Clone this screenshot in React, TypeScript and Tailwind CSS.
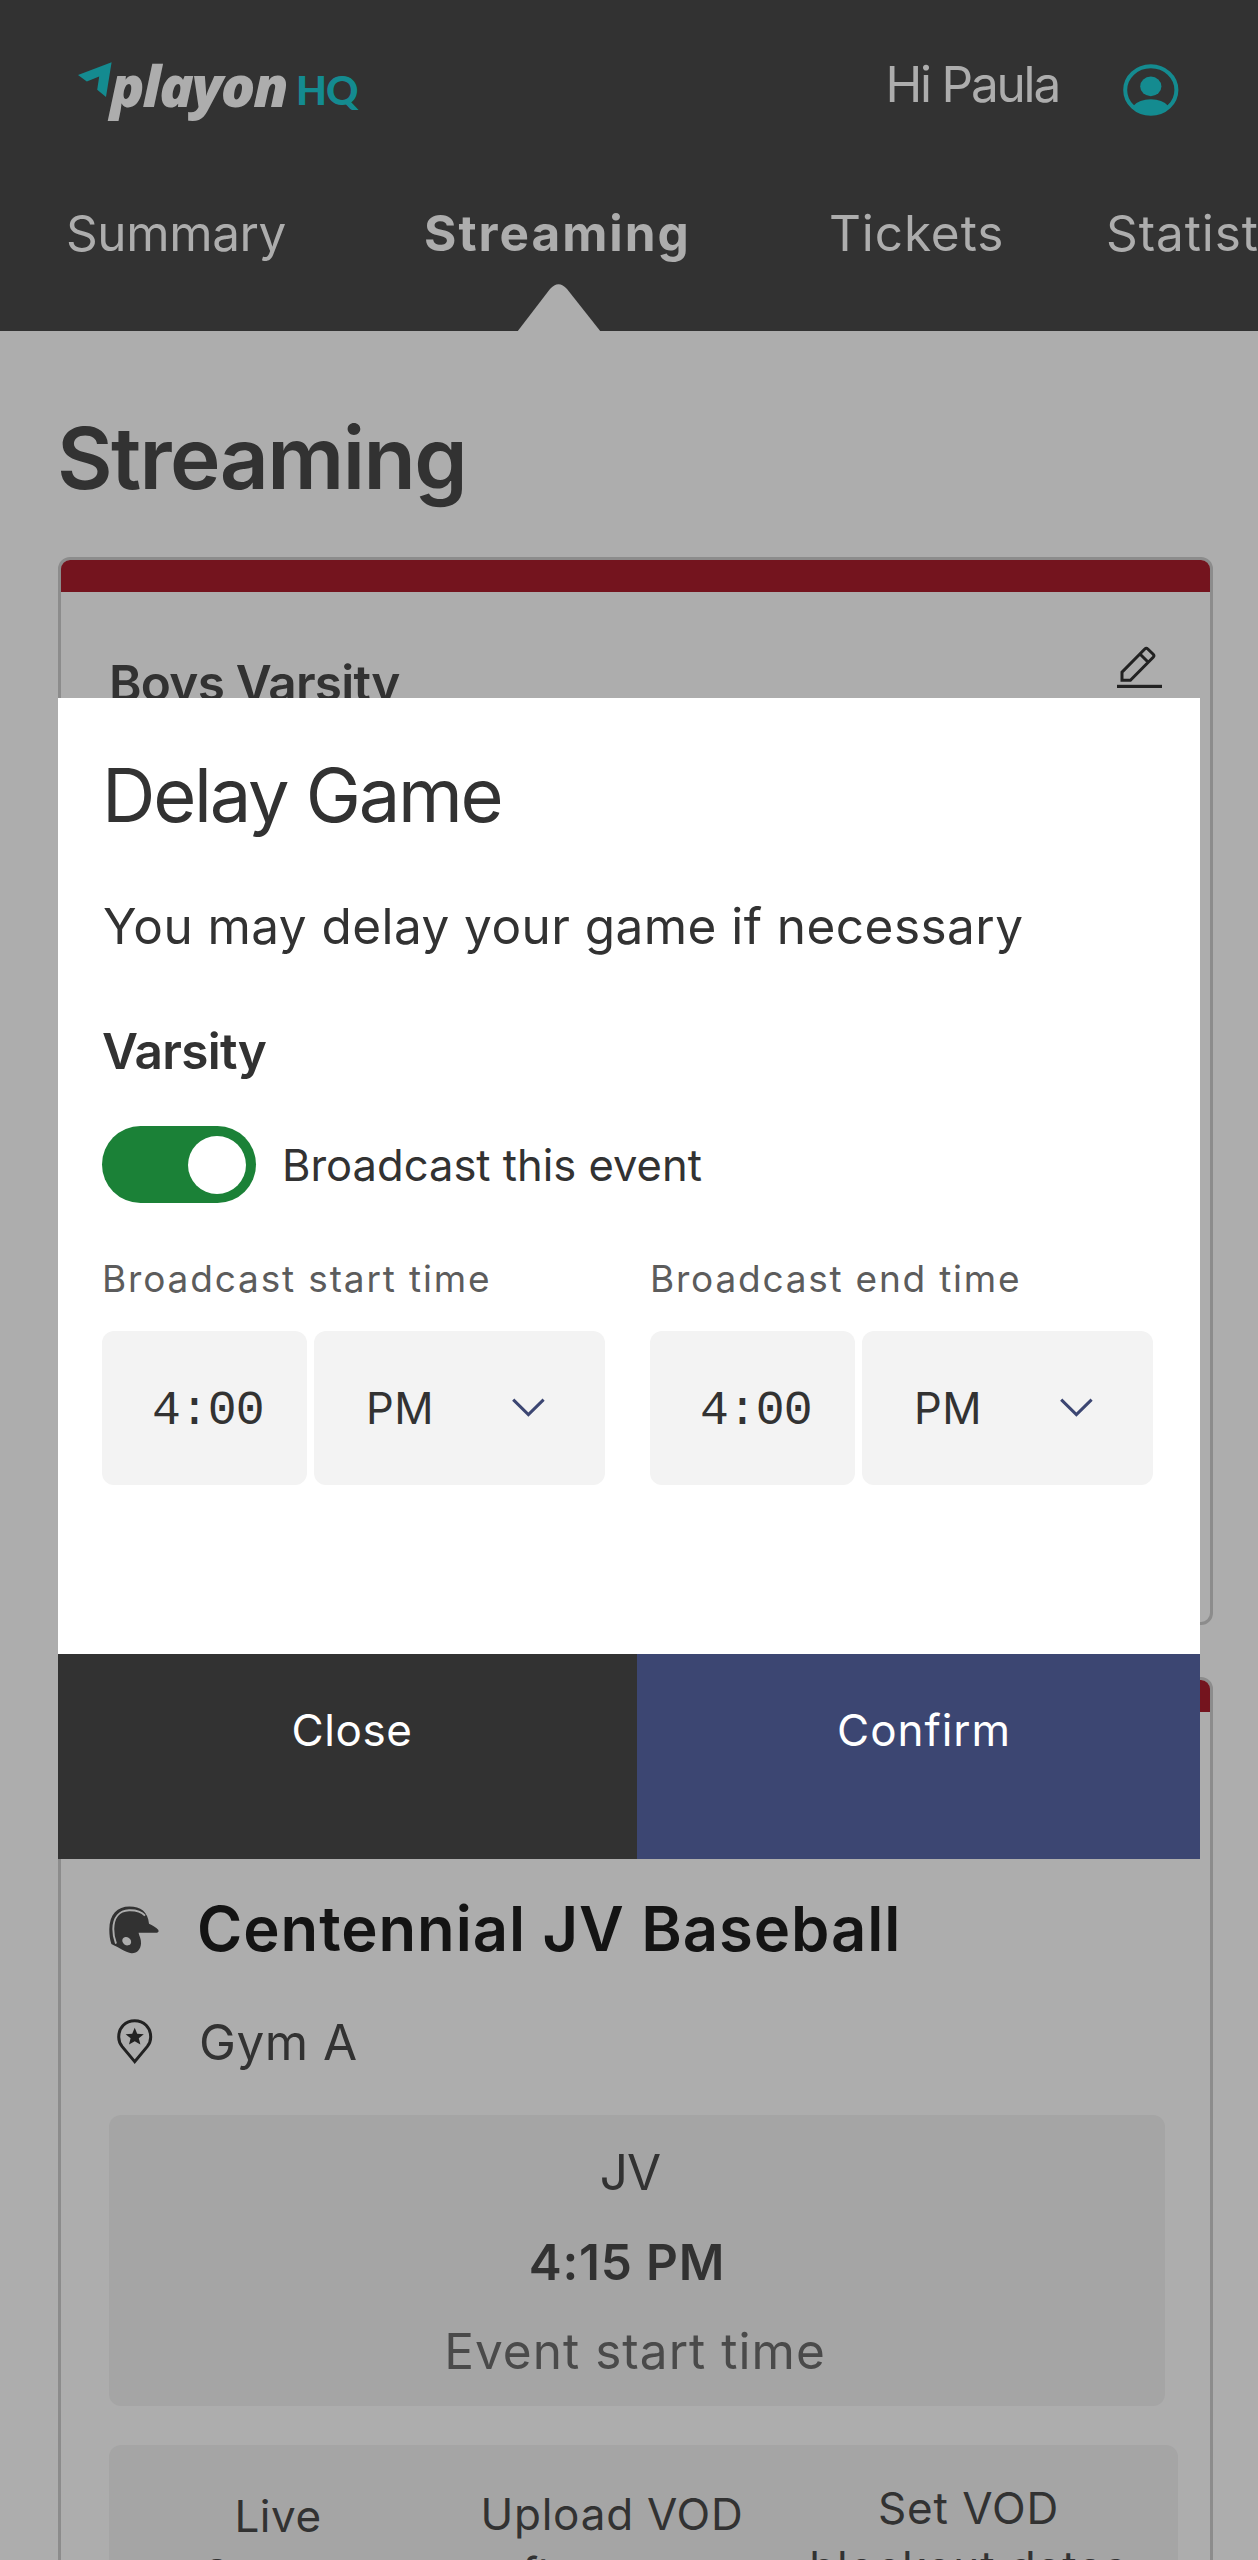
function ArrowMark() {
  return (
    <svg width="34" height="36" viewBox="0 0 34 36" className="shrink-0" aria-hidden="true">
      <path d="M0 13 L33.6 0.3 L28 35 L19.2 27.7 L21.2 14.6 L8.8 19.4 Z" fill="#148b90" />
    </svg>
  );
}

function Avatar() {
  return (
    <svg width="56" height="52" viewBox="0 0 56 52" className="shrink-0" aria-label="Account">
      <ellipse cx="27.8" cy="26" rx="25.6" ry="23.8" fill="none" stroke="#148b90" strokeWidth="4" />
      <ellipse cx="27.8" cy="22.4" rx="10.6" ry="9.8" fill="#148b90" />
      <path d="M10.5 41.8 Q16 35.2 27.8 35.2 Q39.5 35.2 45 41.8 Q38.5 50.5 27.8 50.5 Q17 50.5 10.5 41.8 Z" fill="#148b90" />
    </svg>
  );
}

function Pencil() {
  return (
    <svg width="45" height="43" viewBox="0 0 45 43" aria-label="Edit">
      <path
        d="M5 34.3 V26.2 L27.8 3 Q29.3 1.5 30.8 3 L36.2 8.3 Q37.6 9.8 36.2 11.3 L13.4 34.3 Z M23.2 8.2 L31 16"
        fill="none"
        stroke="#222"
        strokeWidth="3"
      />
      <rect x="0" y="38.8" width="45" height="3.2" fill="#222" />
    </svg>
  );
}

function Helmet() {
  return (
    <svg width="50" height="48" viewBox="0 0 50 48" className="shrink-0" aria-hidden="true">
      <path
        d="M2.4 38 C0.8 33.5 0.3 28.5 0.3 23.5 C0.3 8 8.5 0.4 20.5 0.4 C31.5 0.4 39 5.5 40 17.8 C43.5 19.2 47 21.5 49.2 23.8 C49.9 25 49.6 26.6 48 26.8 H29.6 C30.2 30.5 32.2 32.2 32 37.5 C31.7 43.5 28 47.5 22.5 47.2 C17 46.6 10 41.5 2.4 38 Z"
        fill="#323232"
      />
      <path
        d="M7 37.6 C5.2 33 4.2 28 4.3 23 C4.5 11 10.5 4.6 20 4.2 C26.5 4 32 5.2 36 9.6"
        fill="none"
        stroke="#adadad"
        strokeWidth="1.9"
      />
      <ellipse cx="17.7" cy="35.2" rx="4.7" ry="3.9" transform="rotate(35 17.7 35.2)" fill="#adadad" />
    </svg>
  );
}

function VenuePin() {
  return (
    <svg width="36" height="46" viewBox="0 0 36 46" className="shrink-0" aria-hidden="true">
      <path
        d="M17.7 42.6 L5.2 27.6 C2.8 24.5 1.7 21.4 1.7 17.9 C1.7 8.6 8.6 1.7 17.7 1.7 C26.8 1.7 33.7 8.6 33.7 17.9 C33.7 21.4 32.6 24.5 30.2 27.6 Z"
        fill="none"
        stroke="#222"
        strokeWidth="3"
      />
      <path
        d="M17.7 8.8 L20.2 14.8 L26.8 15.2 L21.8 19.2 L23.4 25.6 L17.7 22.2 L12 25.6 L13.6 19.2 L8.6 15.2 L15.2 14.8 Z"
        fill="#222"
      />
    </svg>
  );
}

function Chevron() {
  return (
    <svg width="33" height="20" viewBox="0 0 33 20" aria-hidden="true">
      <path d="M1.2 1.6 L16.4 16.6 L31.6 1.6" fill="none" stroke="#3c4672" strokeWidth="3" />
    </svg>
  );
}

function TimeField({ label, tracking }: { label: string; tracking: string }) {
  return (
    <div className="w-[503px]">
      <div className={`text-[37px] leading-[48px] text-[#5c5c5c] ${tracking}`}>{label}</div>
      <div className="mt-7 flex h-[154px] gap-[7px]">
        <div className="flex w-[205px] items-center rounded-xl bg-[#f3f3f3] pt-[5px] pl-[50px] font-['Liberation_Mono',monospace] text-[48px] leading-[60px] tracking-[-0.9px]">
          4:00
        </div>
        <div className="flex flex-1 items-center justify-between rounded-xl bg-[#f3f3f3] pr-[60px] pl-[52px] text-[43.5px] leading-[60px] tracking-[0.4px]">
          PM
          <Chevron />
        </div>
      </div>
    </div>
  );
}

function Header() {
  return (
    <header className="relative h-[331px] bg-[#323232] text-[#adadad]">
      <div className="flex h-[203px] justify-between pr-[79px] pl-[78px]">
        <div className="flex pt-[62px]">
          <ArrowMark />
          <span className="-mt-[5px] -ml-[2px] w-[188px] font-['Open_Sans',sans-serif] text-[57px] leading-[56px] font-extrabold tracking-[-2px] italic">
            playon
          </span>
          <span className="mt-[4px] -ml-[2px] font-['Lato',sans-serif] text-[40px] leading-[48px] font-black tracking-[-1px] text-[#148b90]">
            HQ
          </span>
        </div>
        <div className="flex gap-[64px]">
          <span className="mt-[54px] text-[49.5px] leading-[60px] tracking-[-2.2px]">Hi Paula</span>
          <div className="mt-[64px]">
            <Avatar />
          </div>
        </div>
      </div>
      <nav className="flex overflow-hidden pl-[66px] text-[49.5px] leading-[60px] whitespace-nowrap">
        <span className="w-[358px] shrink-0 tracking-[-0.4px]">Summary</span>
        <span className="w-[405px] shrink-0 font-bold tracking-[2px]">Streaming</span>
        <span className="w-[277px] shrink-0 tracking-[0.9px]">Tickets</span>
        <span className="tracking-[0.9px]">Statistics</span>
      </nav>
      <svg className="absolute top-[284px] left-[517px]" width="84" height="47" viewBox="0 0 84 47" aria-hidden="true">
        <path d="M0.8 47 L33 5 Q41.5 -4.4 50 5 L83.2 47 Z" fill="#adadad" />
      </svg>
    </header>
  );
}

function DelayGameDialog() {
  return (
    <section
      role="dialog"
      className="absolute top-[698px] left-[58px] flex h-[1161px] w-[1142px] flex-col bg-white text-[#323232]"
    >
      <div className="flex-1 pt-[52px] pl-[44px]">
        <h2 className="text-[74px] leading-[90px] tracking-[-2.26px]">Delay Game</h2>
        <p className="mt-[56px] ml-px text-[49.5px] leading-[60px] tracking-[0.45px]">
          You may delay your game if necessary
        </p>
        <h3 className="mt-[65px] text-[49.5px] leading-[60px] font-semibold tracking-[-0.7px]">Varsity</h3>
        <div className="mt-[45px] flex items-center gap-[26px]">
          <div className="flex h-[77px] w-[154px] items-center justify-end rounded-full bg-[#1b8137] pr-[10px]">
            <div className="size-[58px] rounded-full bg-white" />
          </div>
          <span className="text-[43.5px] leading-[60px]">Broadcast this event</span>
        </div>
        <div className="mt-[52px] flex gap-[45px]">
          <TimeField label="Broadcast start time" tracking="tracking-[1.85px]" />
          <TimeField label="Broadcast end time" tracking="tracking-[1.78px]" />
        </div>
      </div>
      <div className="flex h-[205px] text-center text-[44px] leading-[56px] text-white">
        <div className="w-[579px] bg-[#323232] pt-[48px] pl-[9px] tracking-[0.57px]">Close</div>
        <div className="flex-1 bg-[#3c4672] pt-[48px] pl-[11px] tracking-[0.95px]">Confirm</div>
      </div>
    </section>
  );
}

export default function App() {
  return (
    <div className="relative h-[2560px] w-[1258px] overflow-hidden bg-[#adadad] font-['Inter',sans-serif] text-[#323232]">
      <Header />
      <main className="pl-[58px]">
        <h1 className="mt-[75px] -ml-px text-[85.5px] leading-[104px] font-semibold tracking-[-1.6px]">Streaming</h1>

        <article className="mt-[47px] h-[1068px] w-[1155px] overflow-hidden rounded-xl border-3 border-[#8c8c8c]">
          <div className="h-8 bg-[#74141e]" />
          <div className="flex justify-between pr-12 pl-12">
            <h2 className="mt-[61px] text-[49.5px] leading-[60px] font-semibold tracking-[-0.76px]">Boys Varsity</h2>
            <div className="mt-[54px]">
              <Pencil />
            </div>
          </div>
        </article>

        <article className="mt-[52px] h-[1000px] w-[1155px] overflow-hidden rounded-xl border-3 border-[#8c8c8c]">
          <div className="h-8 bg-[#74141e]" />
          <div className="pt-[180px] pl-12">
            <div className="flex">
              <div className="mt-[14px]">
                <Helmet />
              </div>
              <h2 className="ml-[38px] text-[61.5px] leading-[74px] font-semibold tracking-[0.95px] text-[#141414]">
                Centennial JV Baseball
              </h2>
            </div>
            <div className="mt-[46px] flex pl-2">
              <div className="mt-[7px]">
                <VenuePin />
              </div>
              <span className="ml-[46px] text-[49.5px] leading-[60px] tracking-[0.49px]">Gym A</span>
            </div>
            <div className="mt-[43px] flex h-[291px] w-[1056px] flex-col items-center gap-[30px] rounded-xl bg-[#a5a5a5] pt-[27px] text-[49.5px] leading-[60px]">
              <div className="pr-[14px] tracking-[-0.85px]">JV</div>
              <div className="pr-[20px] font-semibold tracking-[0.8px]">4:15 PM</div>
              <div className="-mt-px pr-[4px] tracking-[1.03px] text-[#4a4a4a]">Event start time</div>
            </div>
            <div className="mt-[39px] flex h-[300px] w-[1069px] rounded-xl bg-[#a5a5a5] text-center text-[44px] leading-[59px]">
              <div className="w-[338px] pt-[42px] tracking-[0.53px]">
                Live
                <br />
                Stream
              </div>
              <div className="w-[330px] pt-[40px] tracking-[0.76px]">
                Upload VOD
                <br />
                after game
              </div>
              <div className="w-[383px] pt-[34px] tracking-[0.9px]">
                Set VOD
                <br />
                blockout dates
              </div>
            </div>
          </div>
        </article>
      </main>
      <DelayGameDialog />
    </div>
  );
}
